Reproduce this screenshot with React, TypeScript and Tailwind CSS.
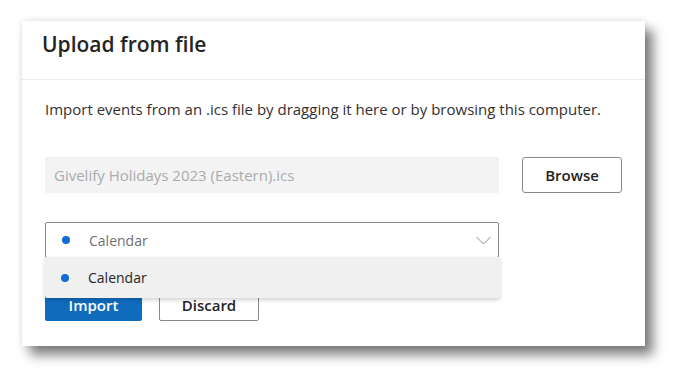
const font = { fontFamily: '"Open Sans", "Noto Sans", sans-serif' };

function Dot() {
  return <span className="block h-2 w-2 shrink-0 rounded-full bg-[#0f6cd4]" />;
}

export default function App() {
  return (
    <div className="h-[388px] w-[687px] bg-white pl-[22px] pt-[21px]" style={font}>
      <div className="flex h-[325px] w-[623px] flex-col bg-white shadow-[8px_9px_11px_rgba(0,0,0,0.5),0_0_6px_rgba(0,0,0,0.12)]">
        <div className="h-[59px] border-b border-[#ececec] px-[20px] pt-[9px]">
          <h1 className="text-[21px] leading-[28px] font-semibold text-[#242424]">Upload from file</h1>
        </div>

        <div className="flex flex-col px-[23px]">
          <p className="mt-[19px] text-[15px] leading-[20px] text-[#323130]">
            Import events from an .ics file by dragging it here or by browsing this computer.
          </p>

          <div className="mt-[38px] flex items-center gap-[23px]">
            <div className="flex h-[36px] w-[454px] items-center bg-[#f3f3f3] px-[9px] text-[15px] text-[#ababab]">
              Givelify Holidays 2023 (Eastern).ics
            </div>
            <button className="h-[36px] w-[100px] rounded-[3px] border border-[#8a8a8a] text-[15px] font-semibold text-[#242424]">
              Browse
            </button>
          </div>

          <div className="relative mt-[29px] w-[454px]">
            <div className="flex h-[36px] items-center rounded-[2px] border border-[#8a8a8a] pl-[16px] pr-[7px]">
              <Dot />
              <span className="ml-[19px] flex-1 text-[14px] text-[#707070]">Calendar</span>
              <svg width="15" height="9" viewBox="0 0 15 9" fill="none" stroke="#8f8f8f" strokeWidth="1">
                <polyline points="0.5,1 7.5,8 14.5,1" />
              </svg>
            </div>
            <div className="absolute left-0 top-[35px] z-10 flex h-[41px] w-[455px] items-center rounded-[2px] bg-[#f0f0f0] pl-[16px] shadow-[0_2px_4px_rgba(0,0,0,0.18)]">
              <Dot />
              <span className="ml-[19px] text-[14px] text-[#242424]">Calendar</span>
            </div>
          </div>

          <div className="mt-[31px] flex gap-[17px]">
            <button className="h-[32px] w-[97px] rounded-[2px] bg-[#0f6cbd] text-[15px] font-semibold text-white">
              Import
            </button>
            <button className="h-[32px] w-[100px] rounded-[2px] border border-[#8a8a8a] text-[15px] font-semibold text-[#242424]">
              Discard
            </button>
          </div>
        </div>
      </div>
    </div>
  );
}
